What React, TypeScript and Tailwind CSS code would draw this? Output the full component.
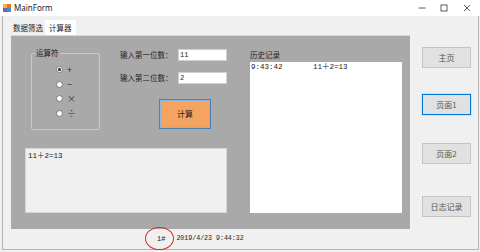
import React from "react";

const cjk = { fontFamily: '"Noto Sans CJK SC", "Noto Sans", sans-serif' };
const mono = { fontFamily: '"Liberation Mono", "Noto Sans CJK SC", monospace' };

function Radio({ checked, label }: { checked?: boolean; label: string }) {
  return (
    <div className="flex items-center h-[7px]">
      <div className="w-[7px] h-[7px] rounded-full bg-white border border-[#7a7a7a] flex items-center justify-center">
        {checked && <div className="w-[3px] h-[3px] rounded-full bg-[#222]" />}
      </div>
      <span className="ml-[4px] text-[9px] leading-none text-[#333]" style={cjk}>{label}</span>
    </div>
  );
}

function SideButton({ label, active }: { label: string; active?: boolean }) {
  return (
    <div
      className={
        "w-[49px] h-[21px] flex items-center justify-center text-[8px] text-[#555] bg-[#e1e1e1] " +
        (active ? "border border-[#0078d7] shadow-[0_0_0_1px_#cce4f7]" : "border border-[#c4c4c4]")
      }
      style={cjk}
    >
      {label}
    </div>
  );
}

export default function App() {
  return (
    <div className="w-[480px] h-[252px] bg-[#f0f0f0] relative overflow-hidden" style={cjk}>
      {/* title bar */}
      <div className="h-[16px] bg-white flex items-center">
        <svg width="8" height="8" viewBox="0 0 8 8" className="ml-[3px]">
          <rect x="0" y="0" width="4" height="4" fill="#f2b632" />
          <rect x="4" y="0" width="4" height="4" fill="#e8742c" />
          <rect x="0" y="4" width="4" height="4" fill="#7b5fb4" />
          <rect x="4" y="4" width="4" height="4" fill="#3d8fd6" />
        </svg>
        <span className="ml-[3px] text-[8px] text-[#222]" style={{ fontFamily: '"Noto Sans", sans-serif' }}>MainForm</span>
        <div className="ml-auto flex items-center">
          <svg width="8" height="8" viewBox="0 0 8 8" className="mr-[14px]">
            <line x1="0.5" y1="4" x2="7.5" y2="4" stroke="#333" strokeWidth="0.8" />
          </svg>
          <svg width="8" height="8" viewBox="0 0 8 8" className="mr-[15px]">
            <rect x="1" y="1" width="6" height="6" fill="none" stroke="#333" strokeWidth="0.8" />
          </svg>
          <svg width="8" height="8" viewBox="0 0 8 8" className="mr-[9px]">
            <line x1="1" y1="1" x2="7" y2="7" stroke="#333" strokeWidth="0.8" />
            <line x1="7" y1="1" x2="1" y2="7" stroke="#333" strokeWidth="0.8" />
          </svg>
        </div>
      </div>

      {/* body */}
      <div className="flex border-l border-[#b4b4b4] ml-[2px] mr-[1px] border-r h-[234px] border-b">
        {/* tab control */}
        <div className="ml-[8px] flex flex-col">
          <div className="h-[19px] flex items-end">
            <div className="h-[15px] flex items-center px-[2px] text-[7.5px] text-[#222]">数据筛选</div>
            <div className="h-[16px] flex items-center px-[4px] bg-white text-[7.5px] text-[#222] mb-[-1px]">计算器</div>
          </div>
          <div className="w-[399px] h-[194px] bg-[#a9a9a9] flex border-t border-[#d8d8d8]">
            {/* left part */}
            <div className="w-[228px] flex flex-col pl-[14px] pt-[13px]">
              <div className="flex items-start">
                {/* group box */}
                <div className="ml-[6px] mt-[4px] w-[69px] h-[77px] border border-[#c8c8c8] rounded-[2px] relative flex flex-col items-start pl-[24px] pt-[12px] gap-[7.5px]">
                  <span className="absolute left-[3px] top-[-6px] bg-[#a9a9a9] px-[1px] text-[7.5px] leading-[10px] text-[#222]">运算符</span>
                  <Radio checked label="+" />
                  <Radio label="−" />
                  <Radio label="×" />
                  <Radio label="÷" />
                </div>
                {/* inputs */}
                <div className="ml-[20px] flex flex-col">
                  <div className="flex items-center h-[12px]">
                    <span className="w-[58px] text-[7.5px] text-[#222] leading-none">输入第一位数：</span>
                    <div className="w-[49px] h-[12px] bg-white border border-[#d0d0d0] flex items-center pl-[1px] text-[7px] text-[#222]" style={mono}>11</div>
                  </div>
                  <div className="flex items-center h-[12px] mt-[11px]">
                    <span className="w-[58px] text-[7.5px] text-[#222] leading-none">输入第二位数：</span>
                    <div className="w-[49px] h-[12px] bg-white border border-[#d0d0d0] flex items-center pl-[1px] text-[7px] text-[#222]" style={mono}>2</div>
                  </div>
                  <div className="ml-[39px] mt-[15px] w-[52px] h-[30px] bg-[#f4a460] border border-[#4a7fb8] shadow-[inset_0_0_0_1px_#8fb6dd] flex items-center justify-center text-[8px] text-[#222]">
                    计算
                  </div>
                </div>
              </div>
              <div className="mt-[18px] w-[202px] h-[65px] bg-[#f0f0f0] border border-[#d6d6d6] pl-[2px] pt-[3px] text-[7.5px] leading-[9px] text-[#222]" style={mono}>
                11＋2=13
              </div>
            </div>
            {/* history */}
            <div className="ml-[11px] flex flex-col pt-[13px]">
              <div className="h-[13px] text-[7.5px] leading-[11px] text-[#222]">历史记录</div>
              <div className="w-[152px] h-[151px] bg-white pl-[1px] pt-[1px] flex text-[7.5px] leading-[9px] text-[#222]" style={mono}>
                <span className="w-[62px]">9:43:42</span>
                <span>11＋2=13</span>
              </div>
            </div>
          </div>
          {/* status */}
          <div className="flex items-center h-[20px] ml-[134px] relative">
            <div className="absolute left-[0px] top-[-2px] w-[29px] h-[23px] rounded-[50%] border-[1.5px] border-[#d42a2a]" />
            <span className="ml-[12px] text-[7px] text-[#222]" style={mono}>1#</span>
            <span className="ml-[11px] text-[6.6px] text-[#222]" style={mono}>2019/4/23 9:44:32</span>
          </div>
        </div>
        {/* right column */}
        <div className="ml-[12px] flex flex-col pt-[31px]">
          <SideButton label="主页" />
          <div className="mt-[26px]"><SideButton label="页面1" active /></div>
          <div className="mt-[28px]"><SideButton label="页面2" /></div>
          <div className="mt-[32px]"><SideButton label="日志记录" /></div>
        </div>
      </div>
    </div>
  );
}
